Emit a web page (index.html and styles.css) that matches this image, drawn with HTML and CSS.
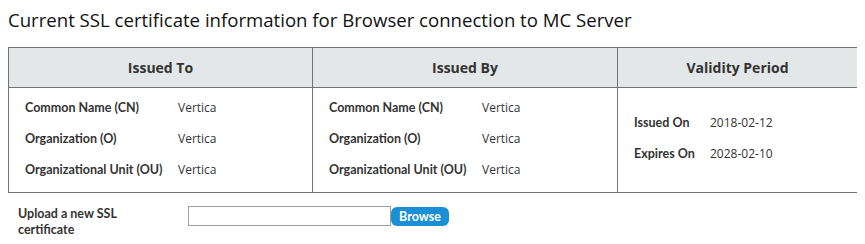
FILE: index.html
```html
<!DOCTYPE html>
<html lang="en">
<head>
    <meta charset="UTF-8">
    <title>SSL Certificate</title>
    <link rel="stylesheet" href="styles.css">
</head>
<body>
<h2 class="title">Current SSL certificate information for Browser connection to MC Server</h2>

<table class="cert-table">
    <thead>
        <tr>
            <th class="col-to">Issued To</th>
            <th class="col-by">Issued By</th>
            <th class="col-valid">Validity Period</th>
        </tr>
    </thead>
    <tbody>
        <tr>
            <td>
                <div class="field"><span class="label">Common Name (CN)</span><span class="value">Vertica</span></div>
                <div class="field"><span class="label">Organization (O)</span><span class="value">Vertica</span></div>
                <div class="field"><span class="label">Organizational Unit (OU)</span><span class="value">Vertica</span></div>
            </td>
            <td>
                <div class="field"><span class="label">Common Name (CN)</span><span class="value">Vertica</span></div>
                <div class="field"><span class="label">Organization (O)</span><span class="value">Vertica</span></div>
                <div class="field"><span class="label">Organizational Unit (OU)</span><span class="value">Vertica</span></div>
            </td>
            <td class="validity">
                <div class="field"><span class="label short">Issued On</span><span class="value">2018-02-12</span></div>
                <div class="field"><span class="label short">Expires On</span><span class="value">2028-02-10</span></div>
            </td>
        </tr>
    </tbody>
</table>

<div class="upload">
    <label class="upload-label">Upload a new SSL certificate</label>
    <input type="text" class="upload-input">
    <button class="browse">Browse</button>
</div>
</body>
</html>
```

FILE: styles.css
```css
body {
    margin: 8px;
    font-family: 'Open Sans', sans-serif;
    color: #222;
    background: #fff;
}
.title {
    font-size: 18.6px;
    font-weight: normal;
    color: #111;
    margin: 0 0 15px 0;
    line-height: 24px;
}
.cert-table {
    width: 850px;
    border-collapse: collapse;
    table-layout: fixed;
    border: 1px solid #737373;
}
.cert-table th {
    background-color: #e4e7e7;
    border: 1px solid #737373;
    height: 39px;
    font-size: 14px;
    font-weight: bold;
    color: #333;
    padding: 0;
}
.col-to { width: 303px; }
.col-by { width: 304px; }
.cert-table td {
    border: 1px solid #737373;
    vertical-align: top;
    padding: 4px 0 0 16px;
    height: 99px;
}
.cert-table td.validity {
    vertical-align: middle;
    padding-top: 0;
    padding-bottom: 5px;
}
.field {
    display: flex;
    align-items: baseline;
    height: 31px;
    line-height: 31px;
}
.label {
    font-family: 'Lato', sans-serif;
    font-size: 12.5px;
    font-weight: bold;
    color: #333;
    width: 153px;
}
.label.short {
    width: 76px;
}
.value {
    font-size: 12px;
    color: #333;
}
.upload {
    display: flex;
    align-items: flex-start;
    margin-top: 13px;
    padding-left: 10px;
}
.upload-label {
    width: 140px;
    font-family: 'Lato', sans-serif;
    font-size: 12.5px;
    font-weight: bold;
    color: #333;
    line-height: 16px;
    margin-right: 30px;
}
.upload-input {
    width: 201px;
    height: 18px;
    border: 1px solid #a0a0a0;
    padding: 0;
    margin: 0;
}
.browse {
    background-color: #1a8fd6;
    color: #fff;
    border: none;
    border-radius: 6px;
    font-family: 'Lato', sans-serif;
    font-size: 12.5px;
    font-weight: bold;
    height: 19px;
    width: 58px;
    padding: 0;
    margin-top: 1px;
    cursor: pointer;
}
```
